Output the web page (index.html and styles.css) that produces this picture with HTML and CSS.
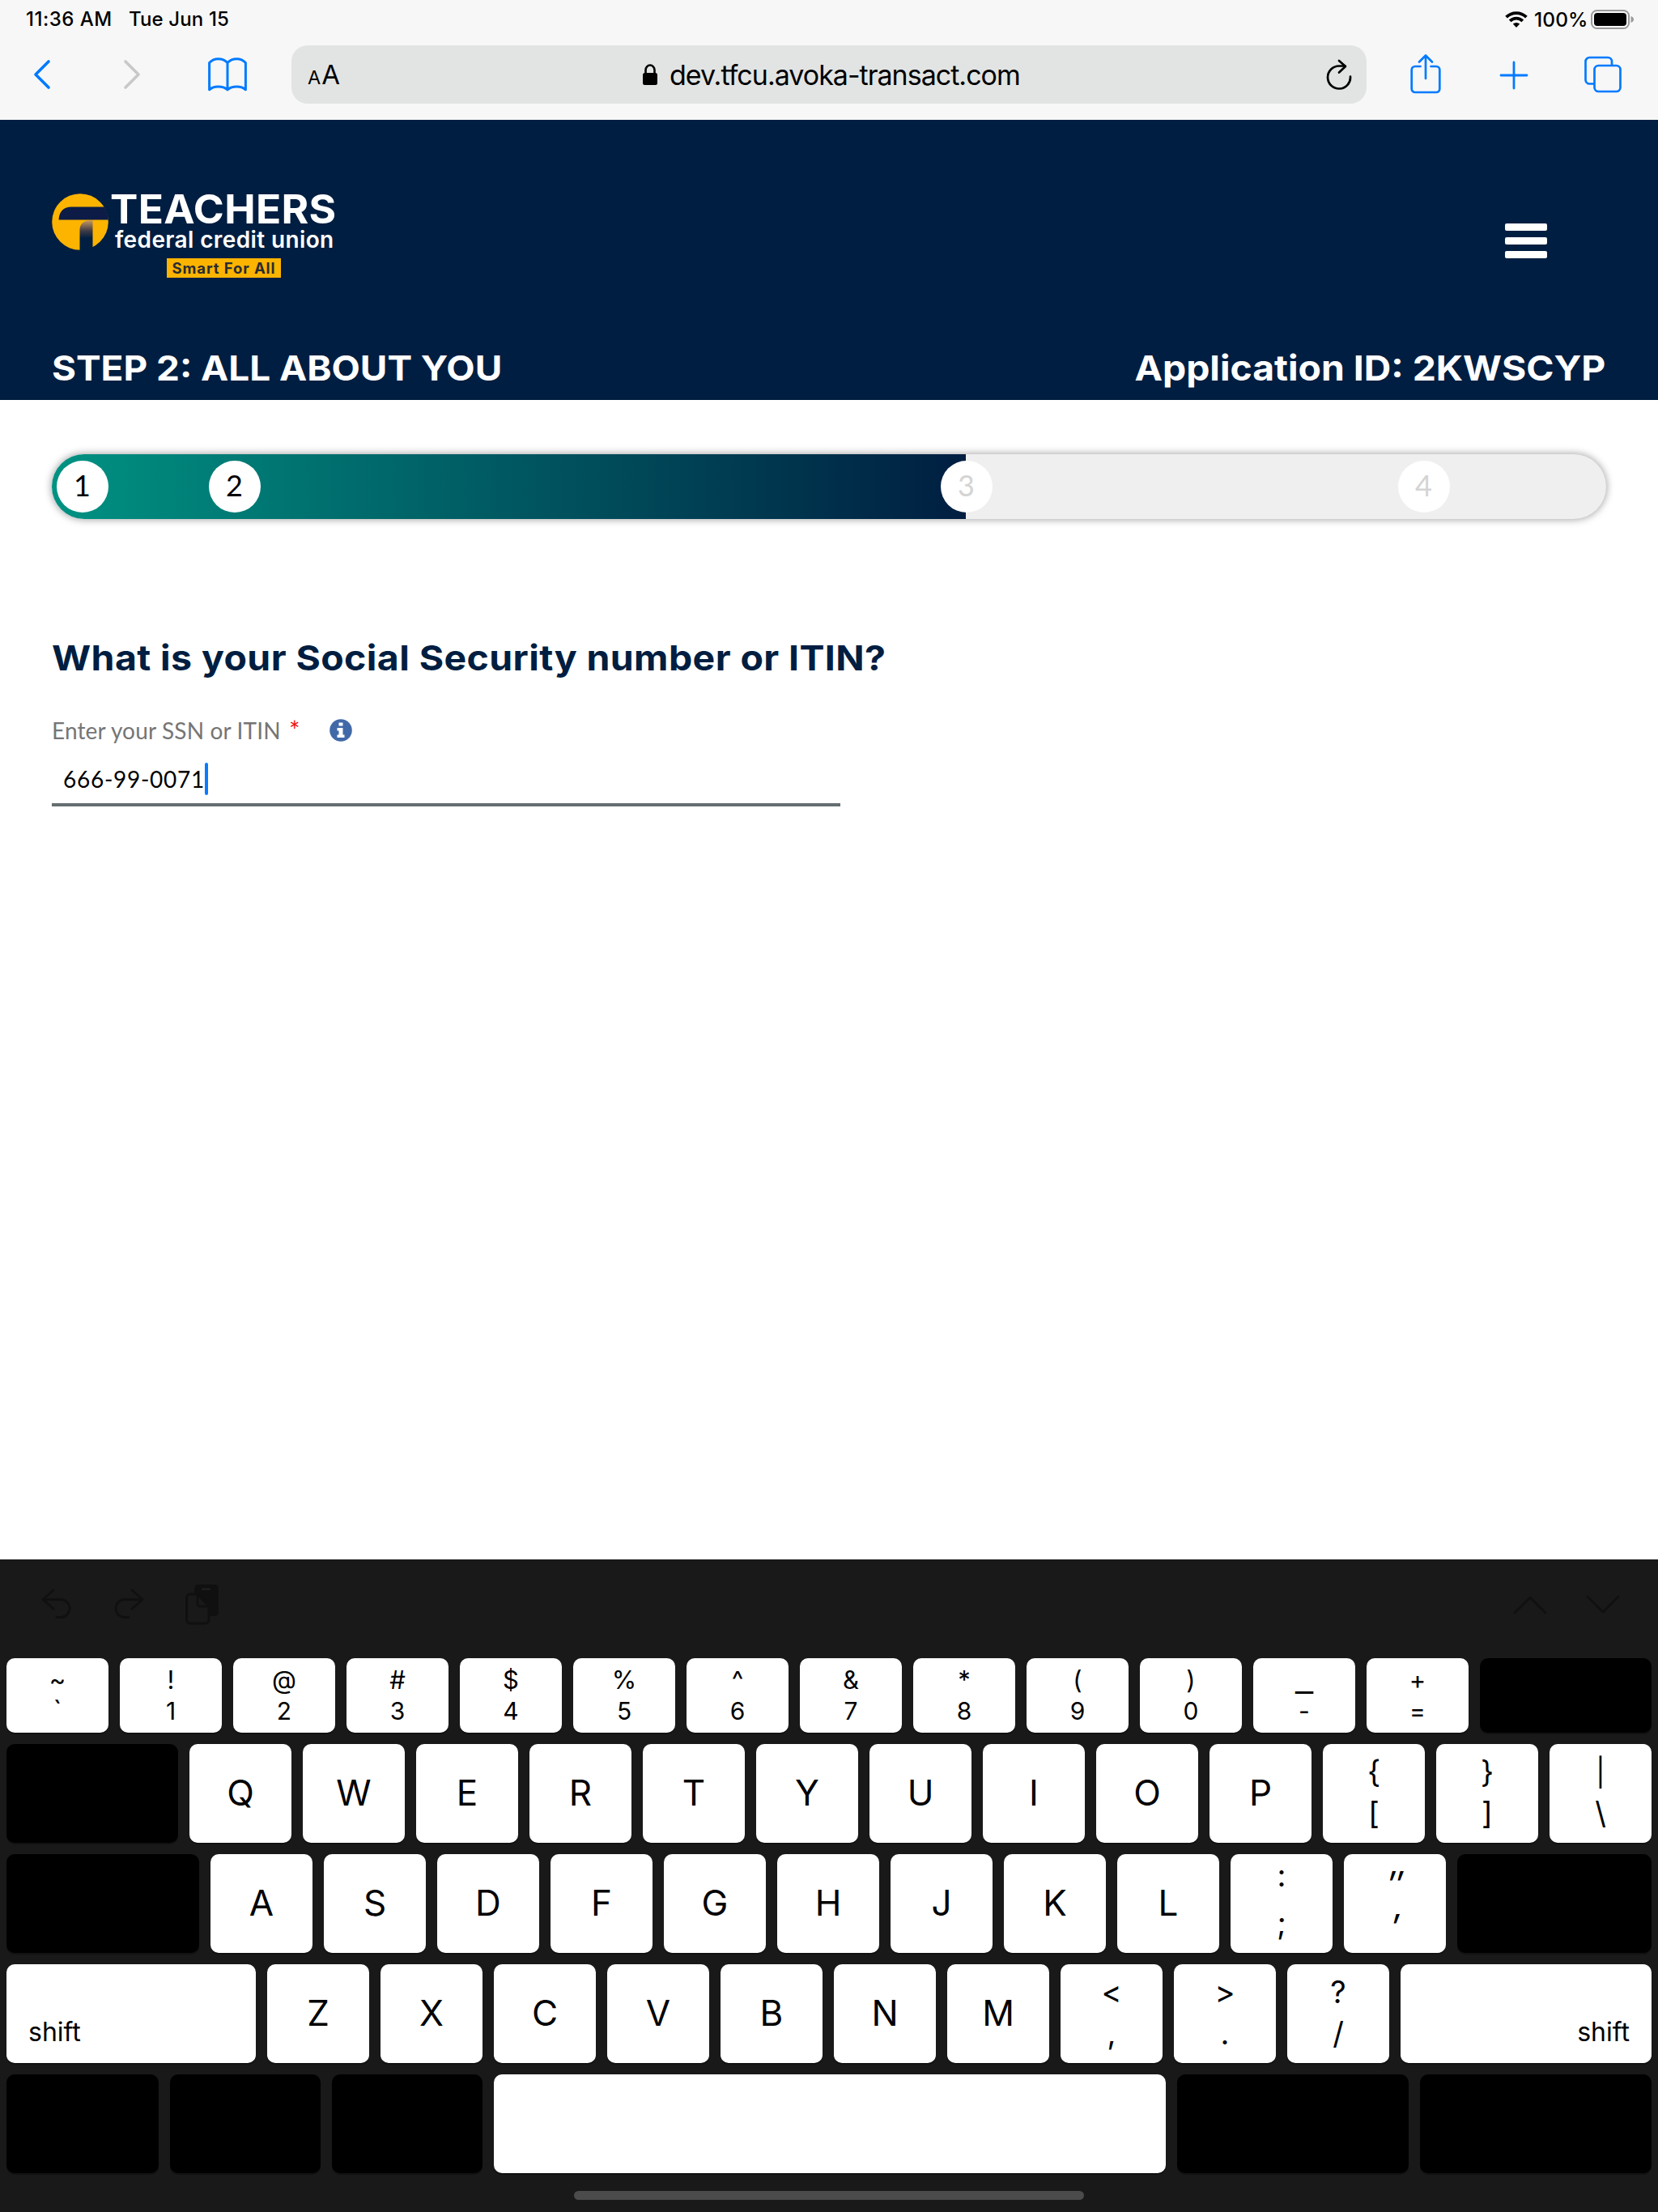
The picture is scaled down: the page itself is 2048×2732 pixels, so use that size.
FILE: index.html
```html
<!DOCTYPE html>
<html lang="en">
<head>
<meta charset="utf-8">
<title>Teachers Federal Credit Union</title>
<link rel="stylesheet" href="styles.css">
</head>
<body>
<div class="screen">

  <div class="chrome">
    <div class="status">
      <span class="status-time">11:36 AM</span>
      <span class="status-date">Tue Jun 15</span>
      <div class="status-right">
        <svg width="28" height="22" viewBox="0 0 28 22" fill="none" stroke="#000" stroke-width="3.8">
          <path d="M1.6 8.2a17.6 17.6 0 0 1 24.8 0"/>
          <path d="M6.2 12.8a11 11 0 0 1 15.6 0"/>
          <path d="M14 21l-4.2-4.4a6 6 0 0 1 8.4 0z" fill="#000" stroke="none"/>
        </svg>
        <span class="status-pct">100%</span>
        <svg width="54" height="26" viewBox="0 0 54 26">
          <rect x="1" y="2" width="46" height="22" rx="6.5" fill="none" stroke="#9b9b9b" stroke-width="2"/>
          <rect x="4" y="5" width="40" height="16" rx="4" fill="#000"/>
          <path d="M49.5 9c2.6.8 3.5 2.3 3.5 4s-.9 3.2-3.5 4z" fill="#9b9b9b"/>
        </svg>
      </div>
    </div>

    <div class="toolbar">
      <svg class="i-back" width="22" height="38" viewBox="0 0 22 38" fill="none" stroke="#007aff" stroke-width="3.6" stroke-linecap="round" stroke-linejoin="round"><path d="M19 3L3 19l16 16"/></svg>
      <svg class="i-fwd" width="22" height="38" viewBox="0 0 22 38" fill="none" stroke="#c8c8c8" stroke-width="3.6" stroke-linecap="round" stroke-linejoin="round"><path d="M3 3l16 16L3 35"/></svg>
      <svg class="i-book" width="48" height="42" viewBox="0 0 48 42" fill="none" stroke="#007aff" stroke-width="3" stroke-linejoin="round"><path d="M24 6.5C21 3.3 17 1.8 12.5 1.8S4.5 3.5 1.6 6.5v33.3C4.5 37.2 8 36 12.5 36s8.5 1.2 11.5 3.8zM24 6.5c3-3.2 7-4.7 11.5-4.7s8 1.7 10.9 4.7v33.3C43.5 37.2 40 36 35.5 36s-8.5 1.2-11.5 3.8z"/></svg>
      <div class="address">
        <div class="text-size"><span class="aa-small">A</span><span class="aa-big">A</span></div>
        <svg class="lock" width="18" height="26" viewBox="0 0 18 26"><path d="M3.5 12V7.5a5.5 6 0 0 1 11 0V12" fill="none" stroke="#000" stroke-width="2.6"/><rect x="0" y="11" width="18" height="15" rx="2.5"/></svg>
        <span class="url">dev.tfcu.avoka-transact.com</span>
        <svg class="reload" width="32" height="38" viewBox="0 0 32 38" fill="none" stroke="#000" stroke-width="2.7" stroke-linecap="round" stroke-linejoin="round"><path d="M30 21.5A14 14 0 1 1 16 8.500h7.500"/><path d="M16 2l8 7-8 7.500"/></svg>
      </div>
      <svg class="i-share" width="38" height="50" viewBox="0 0 38 50" fill="none" stroke="#007aff" stroke-width="2.7" stroke-linecap="round" stroke-linejoin="round"><path d="M12.5 16H6a4.3 4.3 0 0 0-4.300 4.300v23.400A4.300 4.300 0 0 0 6 48h26a4.300 4.300 0 0 0 4.300-4.300V20.300A4.300 4.300 0 0 0 32 16h-6.500M19 31V3M11 10.500L19 2.500l8 8"/></svg>
      <svg class="i-plus" width="36" height="36" viewBox="0 0 36 36" fill="none" stroke="#007aff" stroke-width="2.8" stroke-linecap="round"><path d="M18 2v32M2 18h32"/></svg>
      <svg class="i-tabs" width="46" height="46" viewBox="0 0 46 46" fill="none" stroke="#007aff" stroke-width="2.7"><rect x="12.5" y="12" width="32" height="32" rx="5"/><path d="M12 34.5H6.500a5 5 0 0 1-5-5V7a5 5 0 0 1 5-5H29a5 5 0 0 1 5 5v4.500"/></svg>
    </div>
  </div>

  <header class="site-header">
    <div class="brand-row">
      <div class="logo">
        <svg width="70" height="70" viewBox="0 0 70 70">
          <defs><linearGradient id="stem" x1="0" y1="0" x2="0" y2="1"><stop offset="0" stop-color="#c79a5f"/><stop offset=".35" stop-color="#413b46"/><stop offset=".6" stop-color="#001e41"/></linearGradient></defs>
          <circle cx="35" cy="35" r="34.8" fill="#fdb400"/>
          <path d="M8.5 32.5C9 22 15 16.500 24 16.500H65A35 35 0 0 1 69.800 32.500z" fill="#0c1c46"/>
          <path d="M34.5 70V44C35 36 41 33 50.500 33V68L44 70z" fill="url(#stem)"/>
        </svg>
        <div class="logo-text">
          <span class="logo-name">TEACHERS</span>
          <span class="logo-sub">federal credit union</span>
          <span class="logo-tag">Smart For All</span>
        </div>
      </div>
      <div class="menu"><i></i><i></i><i></i></div>
    </div>
    <div class="title-row">
      <span class="step-title">STEP 2: ALL ABOUT YOU</span>
      <span class="app-id">Application ID: 2KWSCYP</span>
    </div>
  </header>

  <main class="content">
    <div class="progress">
      <div class="progress-fill"></div>
      <span class="dot dot-1">1</span>
      <span class="dot dot-2">2</span>
      <span class="dot dot-3 todo">3</span>
      <span class="dot dot-4 todo">4</span>
    </div>
    <h1>What is your Social Security number or ITIN?</h1>
    <div class="label-row">
      <span class="label">Enter your SSN or ITIN</span><span class="required">*</span>
      <svg width="28" height="28" viewBox="0 0 28 28"><circle cx="14" cy="14" r="13.8" fill="#4169a8"/><path d="M11.5 4.5h5v4h-5zM9.500 11h7v8.500h2V23h-9v-3.500h2v-5h-2z" fill="#fff"/></svg>
    </div>
    <div class="field"><span class="value">666-99-0071</span><i class="caret"></i></div>
  </main>

  <div class="keyboard">
    <div class="kb-bar">
      <svg class="k-undo" width="38" height="38" viewBox="0 0 38 38" fill="none" stroke="#101010" stroke-width="2.8" stroke-linecap="round" stroke-linejoin="round"><path d="M15 2L2 13.5 15 25M2 13.500h22a11 11 0 0 1 0 22h-5"/></svg>
      <svg class="k-redo" width="38" height="38" viewBox="0 0 38 38" fill="none" stroke="#101010" stroke-width="2.8" stroke-linecap="round" stroke-linejoin="round"><path d="M23 2l13 11.5L23 25M36 13.500H14a11 11 0 0 0 0 22h5"/></svg>
      <svg class="k-paste" width="42" height="50" viewBox="0 0 42 50"><rect x="11" y="0" width="30" height="39" rx="5" fill="#101010"/><rect x="20" y="4.5" width="11" height="2.5" rx="1" fill="#1e1e1e"/><path d="M6 12h9l14 15v16.500a4.500 4.500 0 0 1-4.500 4.500H6a4.500 4.500 0 0 1-4.500-4.500v-27A4.500 4.500 0 0 1 6 12z" fill="#191919" stroke="#101010" stroke-width="2.8"/><path d="M15 12v12a3 3 0 0 0 3 3h11" fill="none" stroke="#101010" stroke-width="2.8"/></svg>
      <svg class="k-up" width="42" height="24" viewBox="0 0 42 24" fill="none" stroke="#101010" stroke-width="2.8" stroke-linecap="round" stroke-linejoin="round"><path d="M2 22L21 3l19 19"/></svg>
      <svg class="k-down" width="42" height="24" viewBox="0 0 42 24" fill="none" stroke="#101010" stroke-width="2.8" stroke-linecap="round" stroke-linejoin="round"><path d="M2 2l19 19L40 2"/></svg>
    </div>
    <div class="keys">
      <div class="row nums">
        <div class="key"><b class="tilde">~</b><b class="tick">`</b></div><div class="key"><b>!</b><b>1</b></div><div class="key"><b>@</b><b>2</b></div><div class="key"><b>#</b><b>3</b></div><div class="key"><b>$</b><b>4</b></div><div class="key"><b>%</b><b>5</b></div><div class="key"><b>^</b><b>6</b></div><div class="key"><b>&amp;</b><b>7</b></div><div class="key"><b>*</b><b>8</b></div><div class="key"><b>(</b><b>9</b></div><div class="key"><b>)</b><b>0</b></div><div class="key"><b class="under">_</b><b>-</b></div><div class="key"><b>+</b><b>=</b></div><div class="key dark grow"></div>
      </div>
      <div class="row">
        <div class="key dark grow"></div><div class="key">Q</div><div class="key">W</div><div class="key">E</div><div class="key">R</div><div class="key">T</div><div class="key">Y</div><div class="key">U</div><div class="key">I</div><div class="key">O</div><div class="key">P</div><div class="key two"><b>{</b><b>[</b></div><div class="key two"><b>}</b><b>]</b></div><div class="key two"><b class="pipe">|</b><b>\</b></div>
      </div>
      <div class="row">
        <div class="key dark caps"></div><div class="key">A</div><div class="key">S</div><div class="key">D</div><div class="key">F</div><div class="key">G</div><div class="key">H</div><div class="key">J</div><div class="key">K</div><div class="key">L</div><div class="key two"><b class="colon">:</b><b>;</b></div><div class="key two primes"><b>″</b><b>′</b></div><div class="key dark grow"></div>
      </div>
      <div class="row">
        <div class="key shift">shift</div><div class="key">Z</div><div class="key">X</div><div class="key">C</div><div class="key">V</div><div class="key">B</div><div class="key">N</div><div class="key">M</div><div class="key two"><b>&lt;</b><b>,</b></div><div class="key two"><b>&gt;</b><b>.</b></div><div class="key two"><b>?</b><b>/</b></div><div class="key grow shift-right">shift</div>
      </div>
      <div class="row bottom">
        <div class="key dark"></div><div class="key dark"></div><div class="key dark"></div><div class="key"></div><div class="key dark"></div><div class="key dark"></div>
      </div>
    </div>
    <div class="home-bar"></div>
  </div>

</div>
</body>
</html>
```
FILE: styles.css
```css
* { box-sizing: border-box; }
body { margin: 0; font-family: Inter, "Liberation Sans", sans-serif; color: #000; background: #fff; }
svg { display: block; flex: none; }
.screen { width: 2048px; height: 2732px; display: flex; flex-direction: column; overflow: hidden; }

/* browser chrome */
.chrome { height: 148px; background: #f7f7f7; flex: none; }
.status { height: 48px; margin-bottom: 8px; padding: 0 29px 0 32px; display: flex; align-items: center; font-size: 24px; font-weight: 500; line-height: 48px; white-space: nowrap; }
.status-time { width: 127px; letter-spacing: .5px; }
.status-date { letter-spacing: .13px; }
.status-right { margin-left: auto; display: flex; align-items: center; }
.status-pct { width: 70px; margin-left: 8px; letter-spacing: .1px; font-size: 24.5px; }
.toolbar { height: 72px; display: flex; align-items: center; padding-left: 41px; }
.i-fwd { margin-left: 89px; }
.i-book { margin-left: 83px; }
.address { width: 1328px; height: 72px; margin-left: 55px; padding: 0 18px 0 20px; border-radius: 20px; background: #e2e4e3; display: flex; align-items: center; line-height: 72px; }
.text-size { width: 414px; padding-top: 3px; display: flex; align-items: baseline; line-height: 72px; }
.aa-small { font-size: 23.5px; }
.aa-big { font-size: 33px; margin-left: 1px; }
.url { margin-left: 15px; padding-top: 1px; font-size: 34px; letter-spacing: -.99px; white-space: nowrap; }
.reload { margin-left: auto; }
.i-share { margin: -3px 0 0 54px; }
.i-plus { margin: 2px 0 0 72px; }
.i-tabs { margin-left: 69px; }

/* site header */
.site-header { height: 346px; background: #001e41; color: #fff; padding: 91px 64px 0; flex: none; }
.brand-row { height: 194px; display: flex; }
.logo { display: flex; gap: 2px; }
.logo-text { display: flex; flex-direction: column; align-items: flex-start; width: 280px; white-space: nowrap; }
.logo-name { font-weight: 700; font-size: 49px; line-height: 36px; height: 40px; padding-top: 2px; letter-spacing: .3px; transform: scaleX(1.05); transform-origin: left; }
.logo-sub { font-weight: 600; font-size: 28px; line-height: 30px; margin-left: 6px; padding-top: 2px; letter-spacing: .38px; }
.logo-tag { font-weight: 700; font-size: 18.5px; line-height: 24px; width: 141px; height: 24px; margin: 8px 0 0 70px; background: #fdb400; color: #2a2c33; text-align: center; letter-spacing: .9px; }
.menu { margin: 37px 73px 0 auto; display: flex; flex-direction: column; gap: 8px; }
.menu i { width: 52px; height: 9px; border-radius: 2px; background: #fff; }
.title-row { display: flex; justify-content: space-between; height: 50px; line-height: 50px; margin-top: -4.5px; padding-right: 1px; font-weight: 700; font-size: 43px; white-space: nowrap; }
.step-title { transform: scaleX(1.066); transform-origin: left; }
.app-id { transform: scaleX(1.077); transform-origin: right; }

/* form */
.content { flex: 1; padding: 67px 64px 0; background: #fff; }
.progress { position: relative; width: 1920px; height: 80px; border-radius: 40px; background: #efefef; box-shadow: 0 0 10px 1px rgba(0, 0, 0, .35); }
.progress-fill { width: 1129px; height: 80px; border-radius: 40px 0 0 40px; background: linear-gradient(90deg, #009282, #001e41); }
.dot { position: absolute; top: 8px; width: 64px; height: 64px; padding-right: 1px; border-radius: 50%; background: #fff; font-family: Lato, sans-serif; font-size: 36px; line-height: 61px; text-align: center; }
.dot-1 { left: 6px; }
.dot-2 { left: 194px; }
.dot-3 { left: 1098px; }
.dot-4 { left: 1663px; }
.todo { color: #d4d4d4; }
h1 { margin: 141px 0 0; width: max-content; height: 60px; font-size: 43px; line-height: 60px; font-weight: 700; letter-spacing: .38px; color: #001e41; white-space: nowrap; transform: scaleX(1.08); transform-origin: left; }
.label-row { height: 40px; margin-top: 40px; display: flex; align-items: center; font-family: Lato, sans-serif; font-size: 28px; line-height: 40px; color: #757575; }
.label { letter-spacing: .15px; width: 293px; }
.required { color: #f01010; width: 50px; font-size: 32px; }
.field { display: flex; align-items: center; width: 974px; height: 74px; padding: 9px 0 0 14px; border-bottom: 4px solid #656e70; font-family: Lato, sans-serif; font-size: 28px; }
.value { letter-spacing: .73px; }
.caret { width: 4px; height: 40px; border-radius: 2px; background: #0a7aff; }

/* keyboard */
.keyboard { height: 806px; background: #191919; flex: none; }
.kb-bar { height: 122px; padding: 31px 47px 0 51px; display: flex; align-items: flex-start; }
.k-undo { margin-top: 5px; }
.k-redo { margin: 5px 0 0 51px; }
.k-paste { margin-left: 51px; }
.k-up { margin: 13px 0 0 auto; }
.k-down { margin: 13px 0 0 48px; }
.keys { padding: 0 8px; display: flex; flex-direction: column; gap: 14px; }
.row { display: flex; gap: 14px; height: 122px; }
.key { width: 126px; flex: none; border-radius: 10px; background: #fff; font-size: 44px; line-height: 120px; text-align: center; box-shadow: 0 2px 0 #111; }
.key b { display: block; font-weight: 400; }
.grow { flex: 1; }
.dark { background: #000; }
.nums { height: 92px; }
.nums .key { font-size: 31px; line-height: 38px; padding-top: 8px; }
.nums b + b { font-size: 30px; margin-top: 0; }
.nums .tilde { font-size: 31px; }
.nums .tick { font-size: 34px; }
.nums .under { font-size: 38px; transform: scaleX(1.3); }
.two { font-size: 38px; line-height: 51px; padding-top: 9px; }
.two .pipe { font-size: 34px; }
.two .colon { margin: -8px 0 8px; }
.primes { font-size: 44px; font-style: italic; padding-top: 12px; }
.primes b + b { margin-top: 2px; }
.caps { width: 238px; }
.shift { width: 308px; text-align: left; }
.shift, .shift-right { font-size: 32px; line-height: 40px; padding: 64px 27px 0; }
.shift-right { text-align: right; }
.bottom { display: grid; grid-template-columns: 188px 186px 186px 830px 286px 286px; }
.bottom .key { width: auto; }
.home-bar { width: 630px; height: 11px; margin: 22px auto 0; border-radius: 6px; background: #4b4b4b; }
```
